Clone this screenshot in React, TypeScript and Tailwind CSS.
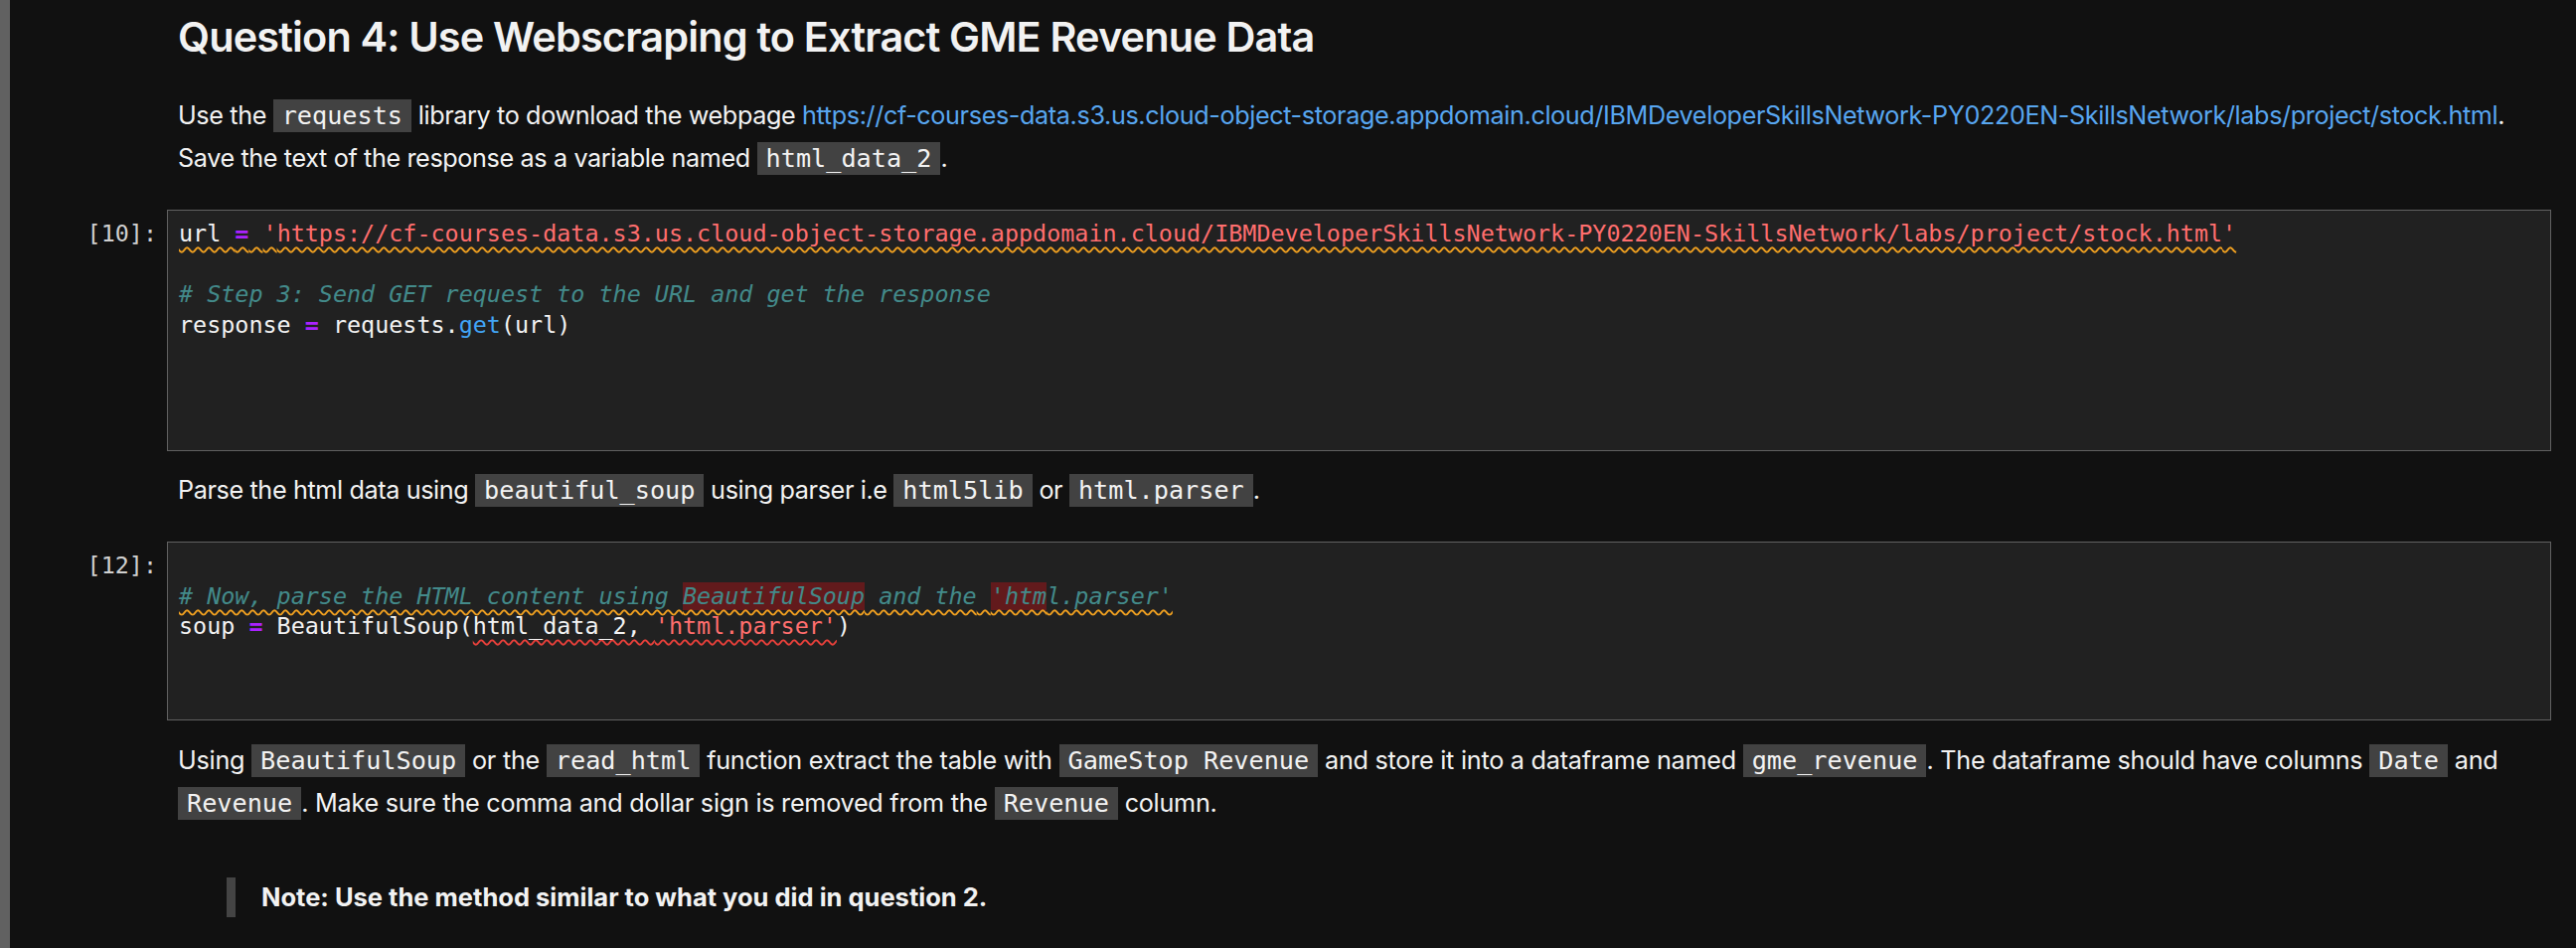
import type { ReactNode } from 'react';

const URL =
  'https://cf-courses-data.s3.us.cloud-object-storage.appdomain.cloud/IBMDeveloperSkillsNetwork-PY0220EN-SkillsNetwork/labs/project/stock.html';

function Code({ children }: { children: ReactNode }) {
  return (
    <code className="bg-[#424242] text-[#f2f2f2] font-['DejaVu_Sans_Mono',monospace] text-[25.2px] tracking-normal px-[9px] py-[2px]">
      {children}
    </code>
  );
}

function Markdown({ className = '', children }: { className?: string; children: ReactNode }) {
  return (
    <div className={`flex ${className}`}>
      <div className="w-[158px] shrink-0" />
      <div className="flex-1 pl-[11px] pr-[36px]">{children}</div>
    </div>
  );
}

function CodeCell({
  n,
  height,
  className = '',
  children,
}: {
  n: number;
  height: string;
  className?: string;
  children: ReactNode;
}) {
  return (
    <div className={`flex ${className}`}>
      <div className="w-[158px] shrink-0 pr-[10px] pt-[9px] text-right text-[#d0d0d0] font-['DejaVu_Sans_Mono',monospace] text-[23.4px] leading-[30.6px]">
        [{n}]:
      </div>
      <div
        className={`flex-1 mr-[25px] ${height} bg-[#212121] border border-[#616161] pl-[11px] pt-[8px] font-['DejaVu_Sans_Mono',monospace] text-[23.4px] leading-[30.6px] text-[#f2f2f2] whitespace-pre`}
      >
        {children}
      </div>
    </div>
  );
}

const Eq = () => <span className="text-[#aa22ff] font-bold">=</span>;

const wavy = 'underline decoration-wavy decoration-[1.5px] underline-offset-[5px]';

export default function App() {
  return (
    <div className="min-h-screen bg-[#111111] flex font-['Inter',sans-serif] text-[#f2f2f2]">
      <div className="w-[10px] shrink-0 bg-[#616161]" />

      <div className="flex-1 pb-[30px]">
        <Markdown className="pt-[12px]">
          <h2 className="text-[41.4px] leading-[50px] font-semibold tracking-[-0.02em]">
            Question 4: Use Webscraping to Extract GME Revenue Data
          </h2>
        </Markdown>

        <Markdown className="mt-[33px]">
          <p className="text-[25.2px] leading-[43px] tracking-[-0.015em]">
            Use the <Code>requests</Code> library to download the webpage{' '}
            <a className="text-[#58a6f0] whitespace-nowrap">{URL}</a>. Save the text of the response as a variable
            named <Code>html_data_2</Code>.
          </p>
        </Markdown>

        <CodeCell n={10} height="h-[243px]" className="mt-[30px]">
          <div>
            <span className={`${wavy} decoration-[#f0a020]`}>
              url <Eq /> <span className="text-[#ff6e6e]">'{URL}'</span>
            </span>
          </div>
          <div> </div>
          <div className="italic text-[#438a8a]"># Step 3: Send GET request to the URL and get the response</div>
          <div>
            response <Eq /> requests.<span className="text-[#42a5f5]">get</span>(url)
          </div>
        </CodeCell>

        <Markdown className="mt-[18px]">
          <p className="text-[25.2px] leading-[43px] tracking-[-0.015em]">
            Parse the html data using <Code>beautiful_soup</Code> using parser i.e <Code>html5lib</Code> or{' '}
            <Code>html.parser</Code>.
          </p>
        </Markdown>

        <CodeCell n={12} height="h-[180px]" className="mt-[30px]">
          <div> </div>
          <div className="italic text-[#438a8a]">
            <span className={`${wavy} decoration-[#f0a020]`}>
              # Now, parse the HTML content using <span className="bg-[#621a1c]">BeautifulSoup</span> and the{' '}
              <span className="bg-[#621a1c]">'htm</span>l.parser'
            </span>
          </div>
          <div>
            soup <Eq /> BeautifulSoup(
            <span className={`${wavy} decoration-[#e8403a]`}>
              html_data_2, <span className="text-[#ff6e6e]">'html.parser'</span>
            </span>
            )
          </div>
        </CodeCell>

        <Markdown className="mt-[19px]">
          <p className="text-[25.2px] leading-[42px] tracking-[-0.01em]">
            Using <Code>BeautifulSoup</Code> or the <Code>read_html</Code> function extract the table with{' '}
            <Code>GameStop Revenue</Code> and store it into a dataframe named <Code>gme_revenue</Code>. The dataframe
            should have columns <Code>Date</Code> and <Code>Revenue</Code>. Make sure the comma and dollar sign is
            removed from the <Code>Revenue</Code> column.
          </p>
        </Markdown>

        <Markdown className="mt-[53px]">
          <blockquote className="ml-[49px] border-l-[9px] border-[#444444] pl-[26px]">
            <p className="text-[25.5px] leading-[40px] font-bold">
              Note: Use the method similar to what you did in question 2.
            </p>
          </blockquote>
        </Markdown>
      </div>
    </div>
  );
}
